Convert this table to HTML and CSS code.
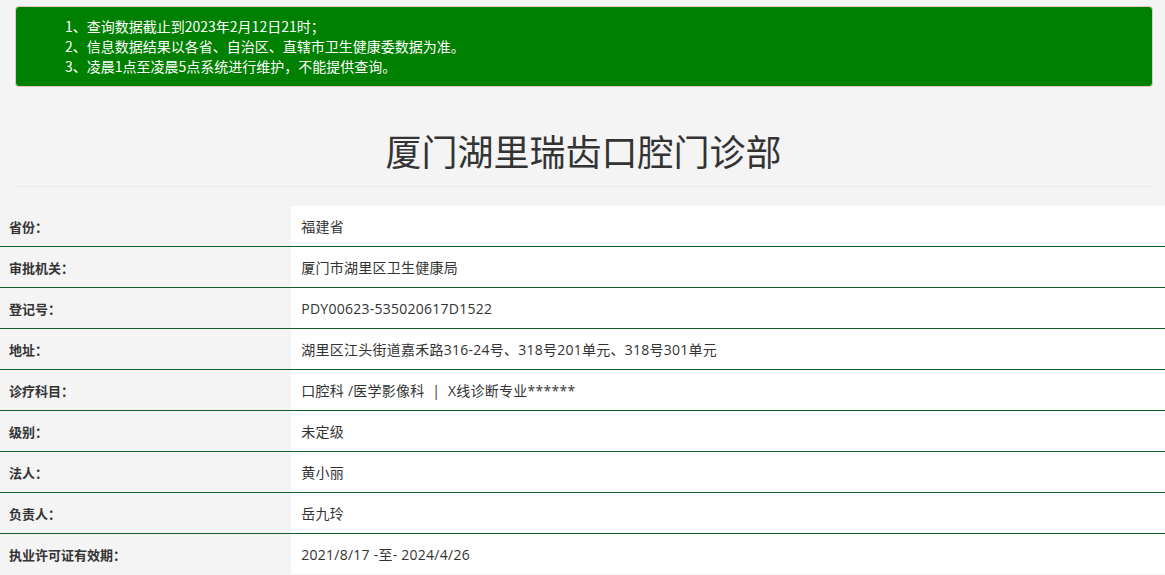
FILE: index.html
```html
<!DOCTYPE html>
<html lang="zh-CN">
<head>
<meta charset="utf-8">
<title>厦门湖里瑞齿口腔门诊部</title>
<link rel="stylesheet" href="styles.css">
</head>
<body>
<div class="notice">
  <p>1、查询数据截止到2023年2月12日21时；</p>
  <p>2、信息数据结果以各省、自治区、直辖市卫生健康委数据为准。</p>
  <p>3、凌晨1点至凌晨5点系统进行维护，不能提供查询。</p>
</div>
<div class="page-header">
  <h1>厦门湖里瑞齿口腔门诊部</h1>
</div>
<table class="info">
  <tr><th>省份：</th><td>福建省</td></tr>
  <tr><th>审批机关：</th><td>厦门市湖里区卫生健康局</td></tr>
  <tr><th>登记号：</th><td>PDY00623-535020617D1522</td></tr>
  <tr><th>地址：</th><td>湖里区江头街道嘉禾路316-24号、318号201单元、318号301单元</td></tr>
  <tr><th>诊疗科目：</th><td>口腔科 /医学影像科 &nbsp;|&nbsp; X线诊断专业******</td></tr>
  <tr><th>级别：</th><td>未定级</td></tr>
  <tr><th>法人：</th><td>黄小丽</td></tr>
  <tr><th>负责人：</th><td>岳九玲</td></tr>
  <tr><th>执业许可证有效期：</th><td>2021/8/17 -至- 2024/4/26</td></tr>
</table>
</body>
</html>
```

FILE: styles.css
```css
html, body {
  margin: 0;
  padding: 0;
}
body {
  background: #f4f4f4;
  color: #333;
  font-family: "Noto Sans CJK SC", "Open Sans", sans-serif;
  font-size: 14px;
}
.notice {
  margin: 6px 12px 0 15px;
  background: #008000;
  border: 1px solid #e3c7c4;
  border-radius: 4px;
  color: #fff;
  padding: 9px 10px 10px 49px;
  font-size: 14px;
  line-height: 20px;
}
.notice p {
  margin: 0;
}
.page-header {
  margin: 43px 12px 19px 14px;
  padding-bottom: 16px;
  border-bottom: 1px solid #e9e9e9;
  text-align: center;
}
.page-header h1 {
  margin: 0;
  font-size: 36px;
  line-height: 40px;
  font-weight: 400;
  color: #333;
}
.info {
  width: 100%;
  border-collapse: collapse;
}
.info th, .info td {
  height: 40px;
  padding: 0 9px;
  border-bottom: 1px solid #0f5e2d;
  text-align: left;
  vertical-align: middle;
}
.info th {
  width: 25%;
  box-sizing: border-box;
  font-size: 13px;
  font-weight: 700;
  background: #f4f4f4;
}
.info td {
  background: #fff;
  font-size: 14px;
  padding-left: 10px;
  letter-spacing: 0.25px;
  font-family: "Open Sans", "Noto Sans CJK SC", sans-serif;
}
.info tr:last-child th, .info tr:last-child td {
  border-bottom: none;
}
```
